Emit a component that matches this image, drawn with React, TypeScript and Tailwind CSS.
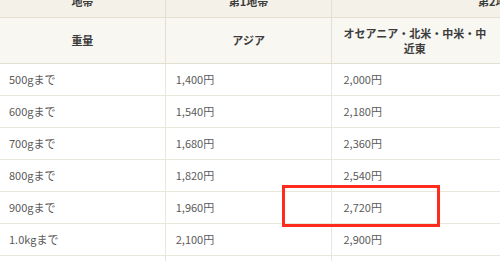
import React from "react";

const rows = [
  ["500gまで", "1,400円", "2,000円"],
  ["600gまで", "1,540円", "2,180円"],
  ["700gまで", "1,680円", "2,360円"],
  ["800gまで", "1,820円", "2,540円"],
  ["900gまで", "1,960円", "2,720円"],
  ["1.0kgまで", "2,100円", "2,900円"],
  ["1.25kgまで", "2,400円", "3,300円"],
];

export default function App() {
  return (
    <div className="relative w-[500px] h-[261px] overflow-hidden bg-white font-['Noto_Sans_CJK_JP','Noto_Sans',sans-serif] text-[11px] leading-[15px]">
      <table className="border-collapse w-[665px] min-w-[665px] ml-[-1px] mt-[-15px]">
        <thead>
          <tr className="bg-[#f3f1e8] text-[#3c3c3c] font-bold">
            <th className="h-[32px] border border-[#e4e0d0] text-center">地帯</th>
            <th className="border border-[#e4e0d0] text-center">第1地帯</th>
            <th colSpan={2} className="border border-[#e4e0d0] text-center">第2地帯</th>
          </tr>
          <tr className="bg-[#f8f7f2] text-[#3c3c3c] font-bold">
            <th className="w-[166px] h-[46px] border border-[#e4e0d0] text-center">重量</th>
            <th className="w-[167px] border border-[#e4e0d0] text-center">アジア</th>
            <th className="w-[176px] border border-[#e4e0d0] text-center pl-[8px] pr-[18px]">オセアニア・北米・中米・中近東</th>
            <th className="w-[156px] border border-[#e4e0d0] text-center">ヨーロッパ</th>
          </tr>
        </thead>
        <tbody className="text-[#5a5a5a]">
          {rows.map(([w, a, b]) => (
            <tr key={w}>
              <td className="h-[32px] border border-[#e9e6da] pl-[9px]">{w}</td>
              <td className="border border-[#e9e6da] pl-[10px]">{a}</td>
              <td className="border border-[#e9e6da] pl-[11px]">{b}</td>
              <td className="border border-[#e9e6da] pl-[11px]">2,800円</td>
            </tr>
          ))}
        </tbody>
      </table>
      {/* highlight box */}
      <div className="absolute left-[282px] top-[185px] w-[158px] h-[42px] border-[3px] border-[#ff2b1c]" />
    </div>
  );
}
